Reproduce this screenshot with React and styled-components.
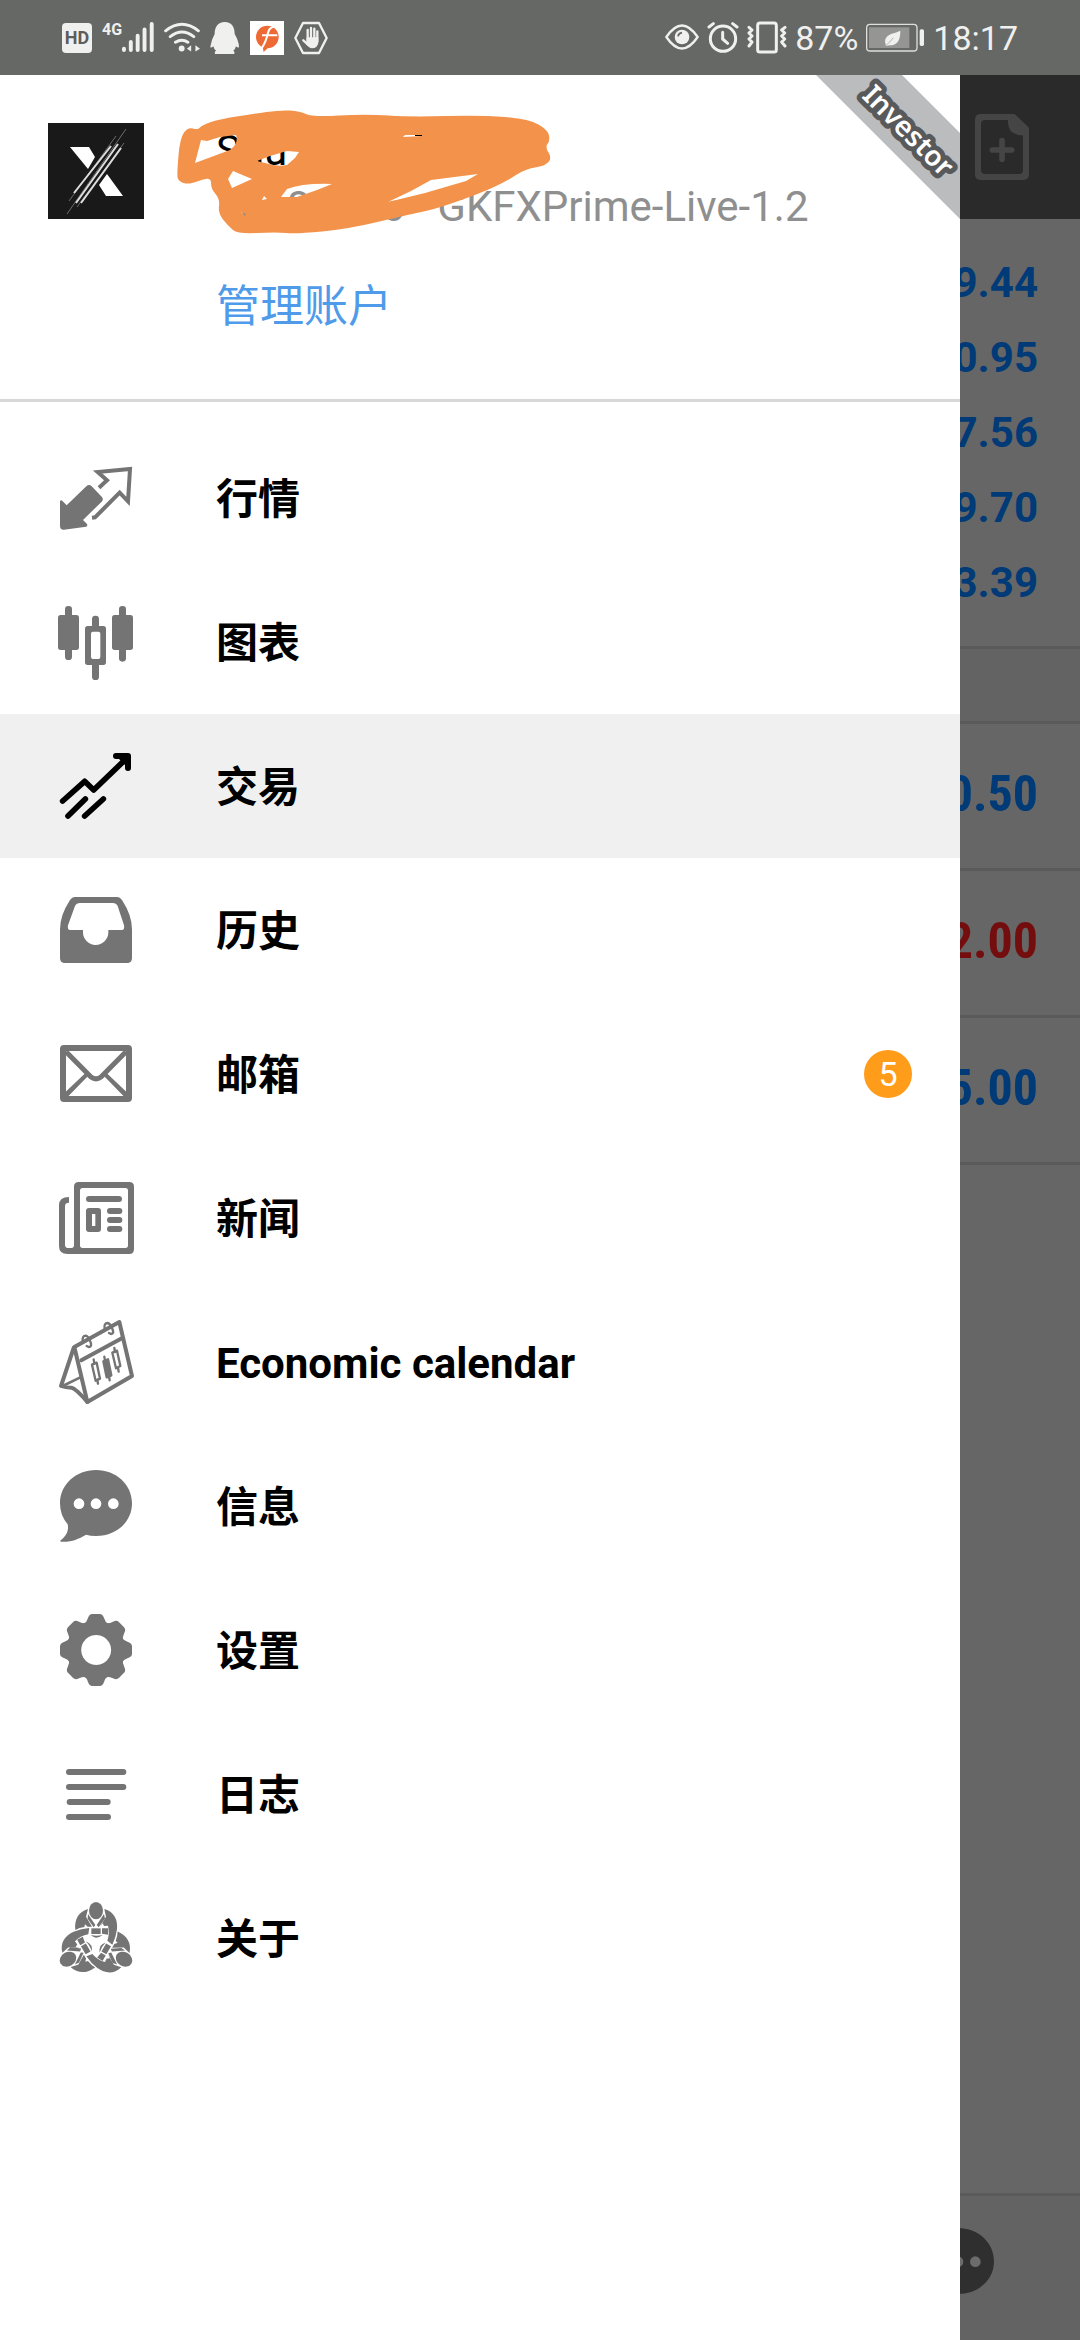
import React from "react";
import styled, { createGlobalStyle } from "styled-components";

const GlobalStyle = createGlobalStyle`
  * { box-sizing: border-box; }
  body {
    margin: 0;
    background: #666666;
    font-family: Roboto, "Noto Sans CJK SC", sans-serif;
  }
  button { font: inherit; border: 0; padding: 0; background: none; color: inherit; cursor: pointer; }
  svg { display: block; flex: none; }
`;

const Screen = styled.div`
  min-height: 100vh;
  display: flex;
  flex-direction: column;
`;

/* ---------- status bar ---------- */

const StatusBar = styled.header`
  height: 75px;
  padding: 0 62px;
  display: flex;
  align-items: center;
  justify-content: space-between;
  background: #666865;
  color: #f0f0ef;
`;

const StatusGroup = styled.div`
  display: flex;
  align-items: center;
  gap: ${(p) => p.$gap}px;
`;

const HdBadge = styled.span`
  width: 30px;
  height: 30px;
  border-radius: 4px;
  background: #f0f0ef;
  color: #5c5e5b;
  font: bold 18px/30px Roboto, sans-serif;
  text-align: center;
`;

const Signal = styled.span`
  display: flex;
  align-items: flex-start;
  height: 36px;
`;

const Generation = styled.span`
  font: bold 16px/20px "Liberation Sans Narrow", Roboto, sans-serif;
`;

const StatusText = styled.span`
  font-size: 34px;
  line-height: 40px;
`;

/* ---------- trade page behind the drawer ---------- */

const Stage = styled.div`
  flex: 1;
  position: relative;
  display: flex;
  flex-direction: column;
  background: #666666;
`;

const Toolbar = styled.div`
  height: 144px;
  padding: 0 30px;
  display: flex;
  align-items: center;
  justify-content: flex-end;
  background: #2a2a2a;
  color: #454545;
`;

const Summary = styled.div`
  padding: 26px 42px 26px 0;
  border-bottom: 3px solid #5a5a5a;
`;

const SummaryValue = styled.div`
  font-size: 42px;
  font-weight: bold;
  line-height: 75px;
  text-align: right;
  color: #003a77;
`;

const SectionBar = styled.div`
  height: 75px;
  background: #636363;
  border-bottom: 3px solid #5a5a5a;
`;

const Position = styled.div`
  height: 147px;
  padding: 0 42px 4px 0;
  display: flex;
  align-items: center;
  justify-content: flex-end;
  border-bottom: 3px solid #5a5a5a;
  font: bold 50px/56px "Liberation Sans Narrow", "Roboto Condensed", Roboto, sans-serif;
  color: ${(p) => (p.$loss ? "#740e0e" : "#003a77")};
`;

const BottomBar = styled.div`
  height: 147px;
  margin-top: auto;
  padding: 0 78px 8px 0;
  display: flex;
  align-items: center;
  justify-content: flex-end;
  border-top: 3px solid #5a5a5a;
  background: #636363;
  color: #2f2f2f;
`;

/* ---------- drawer ---------- */

const Drawer = styled.aside`
  position: absolute;
  inset: 0 120px 0 0;
  background: #ffffff;
  overflow: hidden;
`;

const Account = styled.section`
  height: 327px;
  padding: 48px;
  display: flex;
  align-items: flex-start;
  gap: 72px;
  border-bottom: 3px solid #d8d8d8;
`;

const AccountText = styled.div`
  display: flex;
  flex-direction: column;
  align-items: flex-start;
  font-size: 42px;
  line-height: 56px;
  white-space: pre;
`;

const Name = styled.span`
  color: #000000;
`;

const Server = styled.span`
  color: #8f8f8f;
`;

const ManageLink = styled.a`
  margin-top: 44px;
  font-size: 44px;
  color: #4f9bea;
  text-decoration: none;
`;

const Scribble = styled.svg`
  position: absolute;
  left: 170px;
  top: 26px;
`;

const Ribbon = styled.svg`
  position: absolute;
  right: 0;
  top: 0;
`;

const RibbonText = styled.text`
  font: 600 28px "Noto Sans", "Open Sans", sans-serif;
  fill: #ffffff;
  stroke: #58595b;
  stroke-width: 10px;
  stroke-linejoin: round;
  paint-order: stroke;
`;

const Menu = styled.nav`
  padding-top: 24px;
  display: flex;
  flex-direction: column;
`;

const MenuItem = styled.button`
  height: 144px;
  padding: 0 48px;
  display: flex;
  align-items: center;
  gap: 72px;
  text-align: left;
  background: ${(p) => (p.$active ? "#f0f0f0" : "transparent")};
  color: ${(p) => (p.$active ? "#000000" : "#747474")};
`;

const MenuLabel = styled.span`
  flex: 1;
  padding-top: 4px;
  font-size: 42px;
  line-height: 56px;
  font-weight: bold;
  color: #000000;
`;

const Count = styled.span`
  width: 48px;
  height: 48px;
  border-radius: 50%;
  background: #ff9c19;
  color: #ffffff;
  font-size: 34px;
  line-height: 48px;
  text-align: center;
`;

/* ---------- icons ---------- */

const Glyph = ({ box, children }) => (
  <svg width="96" height="96" viewBox={box} fill="currentColor" aria-hidden="true">
    {children}
  </svg>
);

const line = (width) => ({
  fill: "none",
  stroke: "currentColor",
  strokeWidth: width,
  strokeLinecap: "round",
  strokeLinejoin: "round",
});

const QuotesIcon = () => (
  <Glyph box="144 60 288 288">
    <path d="M180 214 Q183 208 188 214 L200 226 L259 169 Q267 161 275 169 L305 200 Q312 208 305 215 L249 270 L261 282 Q264 288 258 290 L192 299 Q180 300 180 288 Z" />
    <path d="M297 173 L321 151 L293 126 L390 117 L384 214 L359 188 L285 262 L276 263" {...line(12)} strokeLinecap="butt" strokeLinejoin="miter" />
  </Glyph>
);

const ChartIcon = () => (
  <Glyph box="144 492 288 288">
    <rect x="195" y="528" width="21" height="162" rx="10" />
    <rect x="174" y="555" width="63" height="105" rx="8" />
    <rect x="357" y="528" width="21" height="167" rx="10" />
    <rect x="336" y="555" width="63" height="105" rx="8" />
    <rect x="276" y="557" width="21" height="40" rx="10" />
    <rect x="276" y="695" width="21" height="55" rx="10" />
    <path fillRule="evenodd" d="M263 588 H310 Q318 588 318 596 V697 Q318 705 310 705 H263 Q255 705 255 697 V596 Q255 588 263 588 Z M279 605 Q273 605 273 611 V681 Q273 687 279 687 H295 Q301 687 301 681 V611 Q301 605 295 605 Z" />
  </Glyph>
);

const TradeIcon = () => (
  <Glyph box="144 924 288 288">
    <path d="M188 1113 L254 1054 L281 1080 L383 982" {...line(17)} />
    <path d="M348 978 H384 V1014" {...line(18)} />
    <path d="M348 978 H384 V1014 Z" />
    <path d="M204 1158 L256 1107 M254 1158 L310 1107" {...line(17)} />
  </Glyph>
);

const HistoryIcon = () => (
  <Glyph box="144 36 288 288">
    <path fillRule="evenodd" d="M224 81 H352 Q360 81 366 90 Q396 136 396 178 V264 Q396 279 381 279 H195 Q180 279 180 264 V178 Q180 136 210 90 Q216 81 224 81 Z M240 99 Q229 99 225 108 L204 166 Q201 180 211 180 H249 V187 A38 38 0 0 0 325 187 V180 H365 Q375 180 372 166 L353 108 Q349 99 338 99 Z" />
  </Glyph>
);

const MailIcon = () => (
  <Glyph box="144 468 288 288">
    <path fillRule="evenodd" d="M192 525 H384 Q396 525 396 537 V684 Q396 696 384 696 H192 Q180 696 180 684 V537 Q180 525 192 525 Z M198 543 V678 H378 V543 Z" />
    <path d="M198 545 L273 621 Q288 632 303 621 L378 545" {...line(15)} strokeLinecap="butt" />
    <path d="M190 672 L254 611 L264 618 L202 682 Z M386 672 L322 611 L312 618 L374 682 Z" />
  </Glyph>
);

const NewsIcon = () => (
  <Glyph box="144 900 288 288">
    <path fillRule="evenodd" d="M236 936 H388 Q402 936 402 950 V1138 Q402 1152 388 1152 H203 Q177 1152 177 1128 V1006 Q177 981 207 981 V998 Q195 998 195 1008 V1124 Q195 1134 206 1134 H216 Q222 1134 222 1126 V950 Q222 936 236 936 Z M248 954 Q240 954 240 962 V1126 Q240 1134 248 1134 H376 Q384 1134 384 1126 V962 Q384 954 376 954 Z" />
    <rect x="258" y="978" width="108" height="18" rx="9" />
    <path fillRule="evenodd" d="M267 1014 H294 Q303 1014 303 1023 V1077 Q303 1086 294 1086 H267 Q258 1086 258 1077 V1023 Q258 1014 267 1014 Z M276 1032 V1068 H286 V1032 Z" />
    <rect x="321" y="1014" width="46" height="18" rx="9" />
    <rect x="321" y="1041" width="46" height="18" rx="9" />
    <rect x="321" y="1068" width="46" height="18" rx="9" />
  </Glyph>
);

const CalendarIcon = () => (
  <Glyph box="144 72 288 288">
    <g {...line(12)}>
      <path d="M223 171 L358 96 L396 258 L262 336 Z" />
      <path d="M244 211 L367 144" />
      <path d="M221 174 L183 288 Q196 293 214 293 Q228 296 262 336" />
      <path d="M188 288 L241 262" strokeWidth="8" />
    </g>
    <g {...line(7)}>
      <path d="M248 155 Q246 137 257 137 Q264 138 269 150 Q279 170 266 171 L260 168" />
      <path d="M314 117 Q311 99 323 99 Q330 100 335 112 Q345 131 333 132 L327 129" />
      <path d="M281 208 L283 220 M292 270 L294 281 M313 200 L315 212 M327 260 L329 271 M343 174 L345 186 M354 233 L356 245" />
      <path d="M276 224 L290 218 L300 266 L287 272 Z" />
      <path d="M310 214 L324 208 L334 256 L320 262 Z" fill="currentColor" />
      <path d="M337 188 L351 182 L361 228 L348 235 Z" />
    </g>
  </Glyph>
);

const ChatShape = () => (
  <path d="M288 540 C348 540 396 583 396 640 C396 697 348 738 288 738 Q271 738 258 734 C234 748 212 757 184 755 Q178 754 183 750 C199 737 207 722 203 703 Q180 676 180 640 C180 583 228 540 288 540 Z" />
);

const MessagesIcon = () => (
  <Glyph box="144 504 288 288">
    <ChatShape />
    <g fill="#ffffff">
      <circle cx="237" cy="641" r="16" />
      <circle cx="288" cy="641" r="16" />
      <circle cx="340" cy="641" r="16" />
    </g>
  </Glyph>
);

const SettingsIcon = () => (
  <Glyph box="144 936 288 288">
    <path
      fillRule="evenodd"
      d="M288 992 A88 88 0 1 1 287 992 Z M288 1035 A45 45 0 1 0 289 1035 Z"
    />
    {[0, 45, 90, 135, 180, 225, 270, 315].map((turn) => (
      <path
        key={turn}
        transform={`rotate(${turn} 288 1080)`}
        d="M252 1002 Q260 996 264 984 Q268 972 277 972 H299 Q308 972 312 984 Q316 996 324 1002 Z"
      />
    ))}
  </Glyph>
);

const JournalIcon = () => (
  <Glyph box="144 108 288 288">
    <rect x="198" y="177" width="181" height="18" rx="9" />
    <rect x="198" y="222" width="181" height="18" rx="9" />
    <rect x="200" y="267" width="132" height="18" rx="9" />
    <rect x="198" y="312" width="135" height="18" rx="9" />
  </Glyph>
);

const AboutIcon = () => (
  <Glyph box="144 540 288 288">
    {[0, 120, 240].map((turn) => (
      <g key={turn} transform={`rotate(${turn} 288 699)`}>
        <path d="M264 597 C236 605 222 629 226 660 Q238 653 253 651 L255 643 L263 650 L276 650 L258 620 Z" />
        <path d="M313 597 C343 605 354 630 351 658 Q348 682 337 704 L322 692 Q330 668 324 647 L312 648 L308 640 L300 650 L318 620 Z" />
        <path d="M264 612 L286 645 L281 652 L263 626 Z M312 612 L290 645 L296 652 L315 626 Z" />
        <path d="M274 655 H302 V672 H274 Z" />
        <path d="M306 655 H325 L324 674 L306 671 Z" />
        <path d="M272 675 Q289 680 308 675 Q298 683 288 683 Q280 682 272 675 Z" />
        <ellipse cx="288" cy="602" rx="21" ry="26" />
      </g>
    ))}
  </Glyph>
);

const NewOrderIcon = () => (
  <Glyph box="522 87 288 288">
    <path
      fillRule="evenodd"
      d="M602 132 H704 L747 173 V313 Q747 330 730 330 H602 Q585 330 585 313 V149 Q585 132 602 132 Z M616 150 Q603 150 603 163 V299 Q603 312 616 312 H717 Q729 312 729 299 V196 H722 Q684 190 684 158 V150 Z"
    />
    <path d="M666 212 V268 M637 240 H695" {...line(17)} />
  </Glyph>
);

const MoreIcon = () => (
  <svg width="84" height="96" viewBox="168 504 252 288" fill="currentColor" aria-hidden="true">
    <ChatShape />
    <g fill="#6c6c6c">
      <circle cx="237" cy="641" r="16" />
      <circle cx="288" cy="641" r="16" />
      <circle cx="340" cy="641" r="16" />
    </g>
  </svg>
);

const BrandMark = () => (
  <svg width="96" height="96" viewBox="0 0 96 96" role="img" aria-label="Broker">
    <rect width="96" height="96" fill="#191919" />
    <path d="M22 24 H41 L47 34 L40 46 Z M59 51 L75 73 H58 L51 62 Z" fill="#ffffff" />
    <path d="M68 13 L21 78 M78 6 L19 91 M76 20 L29 84" stroke="#6c6c6c" strokeWidth="1" />
    <path d="M63 23 L26 70 M70 21 L28 80 M73 25 L33 80" stroke="#dddddd" strokeWidth="2" />
  </svg>
);

/* Runs a soft closed curve through the middle of each edge. */
const softLoop = (pts) => {
  const mid = (a, b) => `${(a[0] + b[0]) / 2} ${(a[1] + b[1]) / 2}`;
  const last = pts[pts.length - 1];
  return (
    `M${mid(last, pts[0])} ` +
    pts.map((p, i) => `Q${p[0]} ${p[1]} ${mid(p, pts[(i + 1) % pts.length])}`).join(" ") +
    " Z"
  );
};

const markerEdge = [
  [177, 172], [180, 137], [188, 126], [198, 129], [202, 124], [220, 118], [253, 113], [280, 109], [300, 110],
  [312, 116], [366, 113], [411, 116], [481, 114], [529, 118], [548, 129], [550, 140], [545, 146], [552, 157],
  [545, 165], [525, 168], [507, 180], [481, 192], [436, 208], [407, 214], [348, 228], [296, 233], [276, 231],
  [238, 233], [228, 225], [218, 212], [220, 198], [211, 188], [211, 175], [189, 184], [178, 180],
];

const markerGaps = [
  "M201 139 L207 140 L220 136 L236 134 Q239 142 230 149 L195 162 Z",
  "M257 160 L270 155 L287 150 L299 151 L295 157 L287 164 Q277 166 265 162 Z",
  "M228 178 L233 170 L252 178 L232 187 Z",
  "M281 196 L287 188 Q303 182 332 183 L317 189 L297 196 Z",
  "M388 201 L411 190 L431 179 L478 173 L466 180 L425 192 Z",
  "M403 136 L405 134 L422 134 L422 135 Z",
  "M241 211 L246 213 L245 215 Z",
  "M262 199 L264 195 L267 198 Z",
];

const Marker = () => (
  <Scribble width="400" height="140" viewBox="170 100 400 140" aria-hidden="true">
    <path fill="#f3924a" fillRule="evenodd" d={[softLoop(markerEdge), ...markerGaps].join(" ")} />
    <path d="M415 134 H422 V135 H415 Z" />
  </Scribble>
);

const SignalBars = () => (
  <svg width="32" height="36" viewBox="240 60 98 108" aria-hidden="true">
    <g {...line(12)}>
      <path d="M246 147 V151 M267 126 V151 M288 107 V151 M309 88 V151 M331 71 V151" />
    </g>
  </svg>
);

const WifiIcon = () => (
  <svg width="36" height="36" viewBox="365 60 110 108" fill="currentColor" aria-hidden="true">
    <path d="M370 92 Q420 52 470 92 M384 110 Q420 82 456 110 M400 127 Q420 114 438 127" {...line(9)} />
    <circle cx="419" cy="146" r="9" />
    <path d="M448 136 V155 L435 147 Z M461 136 V155 L475 147 Z" />
  </svg>
);

const PenguinIcon = () => (
  <svg width="30" height="36" viewBox="505 60 90 108" fill="currentColor" aria-hidden="true">
    <path d="M549 66 C571 66 579 82 579 102 Q591 122 592 140 Q591 146 583 139 Q581 148 575 152 Q580 155 578 162 H520 Q517 155 523 152 Q517 148 515 139 Q507 146 506 140 Q508 122 519 102 C519 82 528 66 549 66 Z" />
  </svg>
);

const BrokerIcon = () => (
  <svg width="34" height="34" viewBox="624 63 102 102" aria-hidden="true">
    <rect x="624" y="63" width="102" height="102" fill="#ffffff" />
    <circle cx="676" cy="111" r="34" fill="#ee6a35" />
    <path d="M660 130 L665 156 L690 132 Z" fill="#ee6a35" />
    <path d="M712 82 Q684 74 678 98 Q672 126 658 146 M660 106 H706" fill="none" stroke="#ffffff" strokeWidth="6" />
  </svg>
);

const HandIcon = () => (
  <svg width="34" height="36" viewBox="750 60 102 108" aria-hidden="true">
    <path d="M777 69 H825 L848 114 L825 159 H777 L754 114 Z" {...line(7)} />
    <path d="M791 90 V120 M801 84 V120 M811 86 V120 M820 94 V124 M778 121 L792 134" {...line(7)} />
    <path d="M788 112 H823 V128 Q820 145 804 145 Q794 144 786 132 Z" fill="currentColor" />
  </svg>
);

const EyeIcon = () => (
  <svg width="34" height="36" viewBox="67 60 102 108" aria-hidden="true">
    <path d="M71 111 Q118 42 165 111 Q118 180 71 111 Z" {...line(7)} />
    <circle cx="118" cy="111" r="22" fill="currentColor" />
    <path d="M106 109 Q108 99 118 98" fill="none" stroke="#666865" strokeWidth="5" />
  </svg>
);

const AlarmIcon = () => (
  <svg width="32" height="36" viewBox="201 60 96 108" aria-hidden="true">
    <circle cx="249" cy="116" r="38" {...line(9)} />
    <path d="M248 97 V117 L263 130" {...line(9)} />
    <path d="M207 81 L220 71 M278 71 L291 81" {...line(9)} />
  </svg>
);

const VibrateIcon = () => (
  <svg width="40" height="36" viewBox="329 60 120 108" aria-hidden="true">
    <rect x="361" y="69" width="56" height="87" rx="7" {...line(9)} />
    <path d="M335 82 L344 90 L335 99 L344 108 L335 117 L344 126 L335 138 M443 82 L433 90 L442 99 L433 108 L442 117 L433 126 L443 138" {...line(9)} />
  </svg>
);

const BatteryIcon = () => (
  <svg width="59" height="36" viewBox="680 60 177 108" aria-hidden="true">
    <rect x="682" y="73" width="151" height="80" rx="10" fill="none" stroke="#dededd" strokeWidth="4" />
    <rect x="689" y="82" width="121" height="62" fill="#959694" />
    <rect x="841" y="88" width="13" height="50" rx="5" fill="currentColor" />
    <path d="M783 92 Q784 136 751 136 L740 138 Q730 112 755 102 Q772 98 783 92 Z" fill="currentColor" />
    <path d="M737 139 Q752 127 762 113" stroke="#959694" strokeWidth="2" fill="none" />
  </svg>
);

/* ---------- data ---------- */

const menu = [
  { label: "行情", Icon: QuotesIcon },
  { label: "图表", Icon: ChartIcon },
  { label: "交易", Icon: TradeIcon, active: true },
  { label: "历史", Icon: HistoryIcon },
  { label: "邮箱", Icon: MailIcon, count: 5 },
  { label: "新闻", Icon: NewsIcon },
  { label: "Economic calendar", Icon: CalendarIcon },
  { label: "信息", Icon: MessagesIcon },
  { label: "设置", Icon: SettingsIcon },
  { label: "日志", Icon: JournalIcon },
  { label: "关于", Icon: AboutIcon },
];

const summary = ["9.44", "0.95", "7.56", "9.70", "3.39"];

const positions = [
  { profit: "0.50" },
  { profit: "2.00", loss: true },
  { profit: "5.00" },
];

export default function App() {
  return (
    <Screen>
      <GlobalStyle />
      <StatusBar>
        <StatusGroup $gap={10}>
          <HdBadge>HD</HdBadge>
          <Signal>
            <Generation>4G</Generation>
            <SignalBars />
          </Signal>
          <WifiIcon />
          <PenguinIcon />
          <BrokerIcon />
          <HandIcon />
        </StatusGroup>
        <StatusGroup $gap={8}>
          <EyeIcon />
          <AlarmIcon />
          <VibrateIcon />
          <StatusText>87%</StatusText>
          <BatteryIcon />
          <StatusText>18:17</StatusText>
        </StatusGroup>
      </StatusBar>

      <Stage>
        <Toolbar>
          <button type="button" aria-label="New order">
            <NewOrderIcon />
          </button>
        </Toolbar>
        <Summary>
          {summary.map((value) => (
            <SummaryValue key={value}>{value}</SummaryValue>
          ))}
        </Summary>
        <SectionBar />
        {positions.map(({ profit, loss }) => (
          <Position key={profit} $loss={loss}>
            {profit}
          </Position>
        ))}
        <BottomBar>
          <button type="button" aria-label="Messages">
            <MoreIcon />
          </button>
        </BottomBar>

        <Drawer>
          <Account>
            <BrandMark />
            <AccountText>
              <Name>Shu</Name>
              <Server>10680896 - GKFXPrime-Live-1.2</Server>
              <ManageLink href="#accounts">管理账户</ManageLink>
            </AccountText>
          </Account>
          <Marker />
          <Ribbon width="144" height="144" viewBox="0 0 144 144">
            <path d="M0 0 H86 L144 58 V144 Z" fill="#bbbcbe" />
            <RibbonText transform="translate(45 22) rotate(45)">Investor</RibbonText>
          </Ribbon>
          <Menu>
            {menu.map(({ label, Icon, active, count }) => (
              <MenuItem key={label} type="button" $active={active} aria-current={active ? "page" : undefined}>
                <Icon />
                <MenuLabel>{label}</MenuLabel>
                {count && <Count>{count}</Count>}
              </MenuItem>
            ))}
          </Menu>
        </Drawer>
      </Stage>
    </Screen>
  );
}
